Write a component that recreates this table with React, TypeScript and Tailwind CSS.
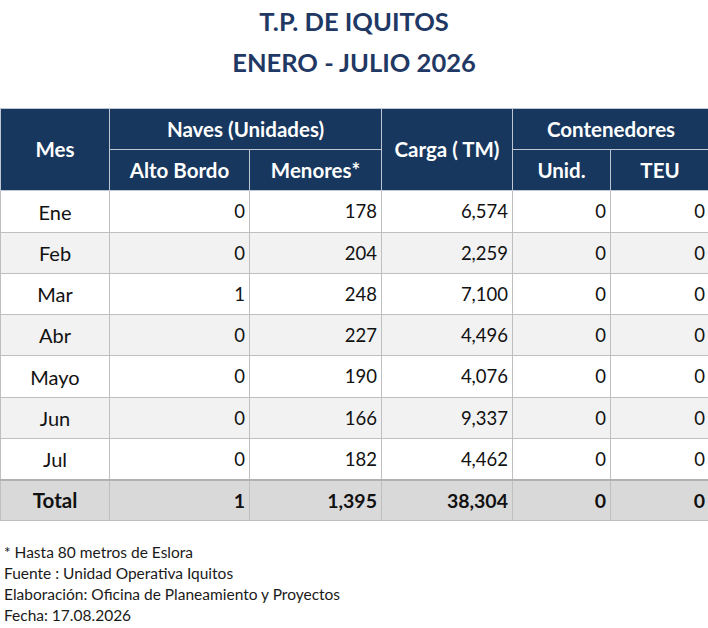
import React from 'react'

type Row = { mes: string; alto: string; menores: string; carga: string; unid: string; teu: string; h: string }

const rows: Row[] = [
  { mes: 'Ene', alto: '0', menores: '178', carga: '6,574', unid: '0', teu: '0', h: 'h-[42px]' },
  { mes: 'Feb', alto: '0', menores: '204', carga: '2,259', unid: '0', teu: '0', h: 'h-[41px]' },
  { mes: 'Mar', alto: '1', menores: '248', carga: '7,100', unid: '0', teu: '0', h: 'h-[41px]' },
  { mes: 'Abr', alto: '0', menores: '227', carga: '4,496', unid: '0', teu: '0', h: 'h-[41px]' },
  { mes: 'Mayo', alto: '0', menores: '190', carga: '4,076', unid: '0', teu: '0', h: 'h-[42px]' },
  { mes: 'Jun', alto: '0', menores: '166', carga: '9,337', unid: '0', teu: '0', h: 'h-[41px]' },
  { mes: 'Jul', alto: '0', menores: '182', carga: '4,462', unid: '0', teu: '0', h: 'h-[41px]' },
]

const th = 'border border-[#bfc7d2] bg-[#17375e] text-white font-bold text-[20.5px] leading-none text-center align-middle p-0'
const td = 'border border-[#bfbfbf] text-[18.5px] leading-none text-[#111] text-right pr-[4px] align-middle'
const tot = 'border border-[#bfbfbf] border-t-2 border-t-[#b0b0b0] text-[19.5px] leading-none text-[#111] text-right pr-[4px] align-middle font-bold'

export default function App() {
  return (
    <div className="w-[708px] h-[628px] bg-white overflow-hidden [font-family:Lato,'Open_Sans',sans-serif]">
      <div className="flex flex-col items-center pt-[1px] h-[108px] text-[#1f3864] font-bold text-[25.5px] leading-[41px]">
        <div>T.P. DE IQUITOS</div>
        <div>ENERO - JULIO 2026</div>
      </div>
      <table className="border-collapse table-fixed w-[709px]">
        <colgroup>
          <col className="w-[109px]" />
          <col className="w-[140px]" />
          <col className="w-[132px]" />
          <col className="w-[131px]" />
          <col className="w-[98px]" />
          <col className="w-[99px]" />
        </colgroup>
        <thead>
          <tr className="h-[41px]">
            <th rowSpan={2} className={th}>Mes</th>
            <th colSpan={2} className={th}>Naves (Unidades)</th>
            <th rowSpan={2} className={th}>Carga ( TM)</th>
            <th colSpan={2} className={th}>Contenedores</th>
          </tr>
          <tr className="h-[41px]">
            <th className={th}>Alto Bordo</th>
            <th className={th}>Menores*</th>
            <th className={th}>Unid.</th>
            <th className={th}>TEU</th>
          </tr>
        </thead>
        <tbody>
          {rows.map((r, i) => (
            <tr key={r.mes} className={`${r.h} ${i % 2 === 1 ? 'bg-[#f2f2f2]' : 'bg-white'}`}>
              <td className="border border-[#bfbfbf] text-[20px] leading-none text-[#111] text-center align-middle">{r.mes}</td>
              <td className={td}>{r.alto}</td>
              <td className={td}>{r.menores}</td>
              <td className={td}>{r.carga}</td>
              <td className={td}>{r.unid}</td>
              <td className={td}>{r.teu}</td>
            </tr>
          ))}
          <tr className="h-[41px] bg-[#d9d9d9]">
            <td className="border border-[#bfbfbf] border-t-2 border-t-[#b0b0b0] text-[20.5px] leading-none text-[#111] text-center align-middle font-bold">Total</td>
            <td className={tot}>1</td>
            <td className={tot}>1,395</td>
            <td className={tot}>38,304</td>
            <td className={tot}>0</td>
            <td className={tot}>0</td>
          </tr>
        </tbody>
      </table>
      <div className="pt-[21px] pl-[4px] text-[15.5px] leading-[21px] text-[#1a1a1a]">
        <div>* Hasta 80 metros de Eslora</div>
        <div>Fuente : Unidad Operativa Iquitos</div>
        <div>Elaboración: Oficina de Planeamiento y Proyectos</div>
        <div>Fecha: 17.08.2026</div>
      </div>
    </div>
  )
}
